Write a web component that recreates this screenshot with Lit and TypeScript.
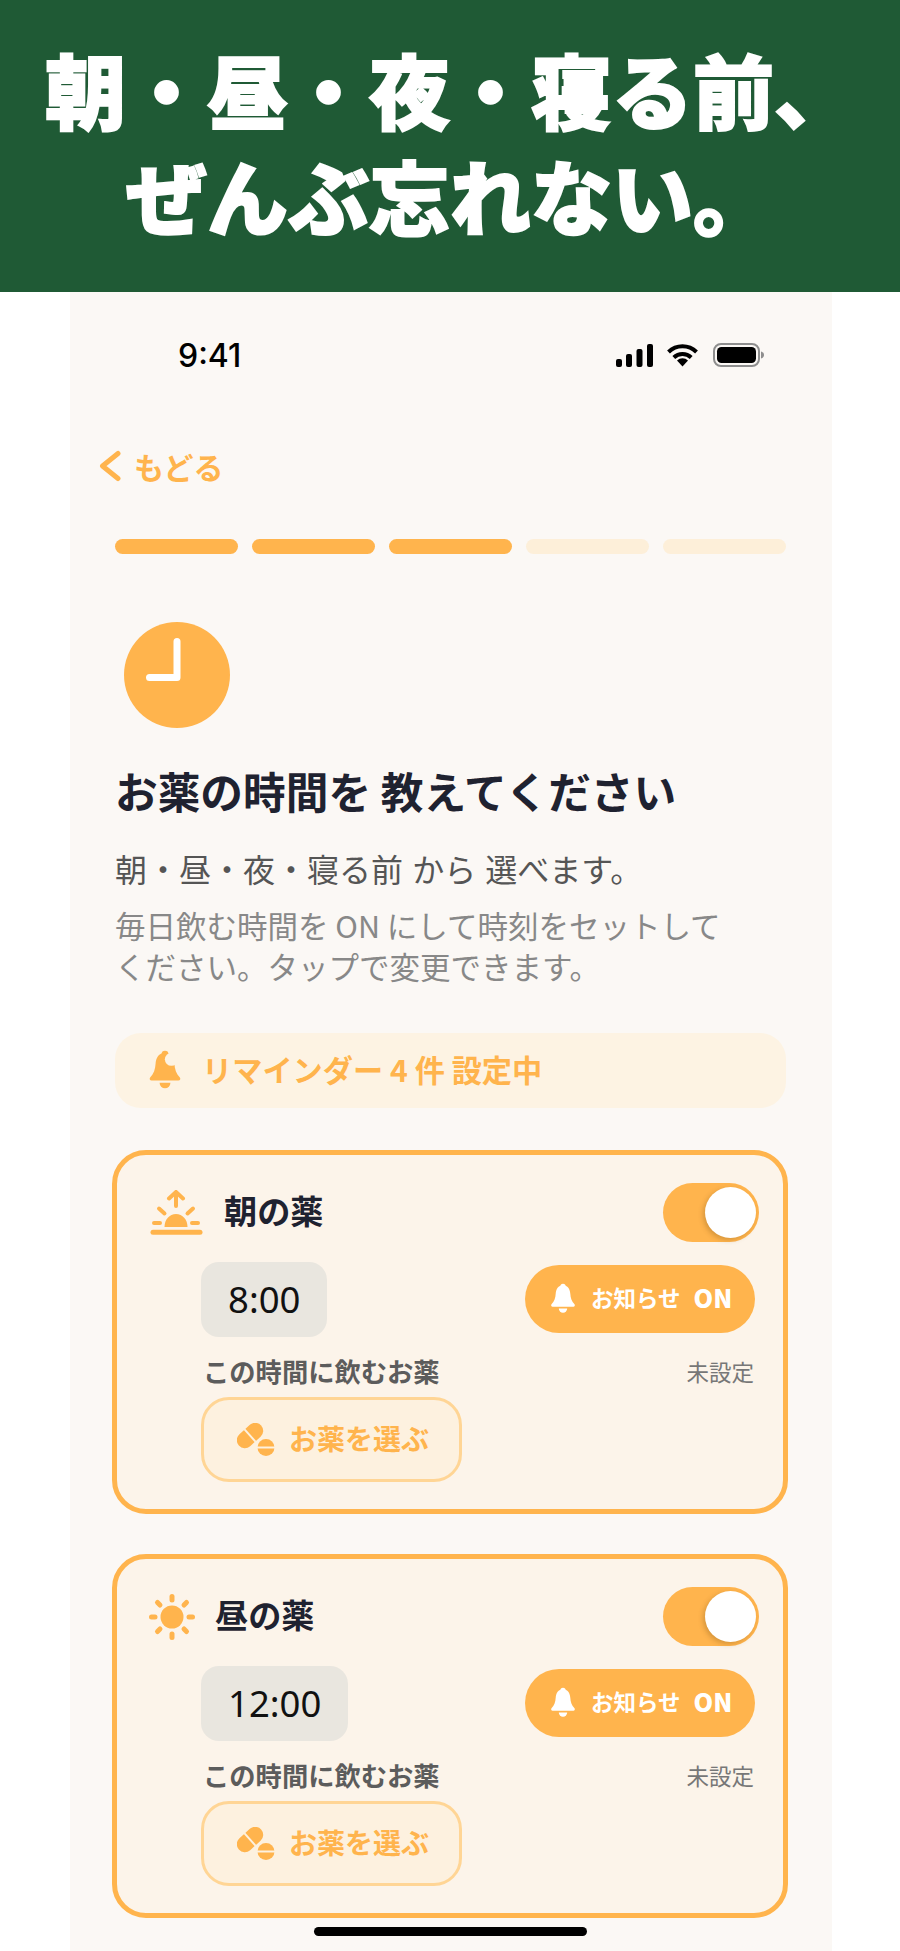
import { LitElement, css, html, svg } from "lit";
import { customElement } from "lit/decorators.js";

const bell = (hole = false) => html`<svg class="bell" viewBox="0 0 24 28">
  <circle cx="12" cy="3" r="2.4" fill="currentColor"></circle>
  <path fill="currentColor" d="M12 2C7.6 2 5.7 5.6 5.4 9.6 5.2 13.4 4.2 16.4 1.6 19.2.9 20 1.4 21.4 2.6 21.4h18.8c1.2 0 1.7-1.4 1-2.2-2.6-2.8-3.6-5.8-3.8-9.6C18.3 5.6 16.4 2 12 2z"></path>
  <path fill="currentColor" d="M8.2 23h7.6a3.8 3.8 0 0 1-7.6 0z"></path>
  ${hole ? svg`<circle cx="16.5" cy="6.5" r="4.6" fill="#fdf3e3"></circle>` : ""}
</svg>`;

const sunrise = html`<svg class="sunrise" viewBox="0 0 54 45" fill="none" stroke="#ffb44d" stroke-linecap="round" stroke-width="4">
  <path d="M27 16V2M20 8.500 27 2l7 6.500"></path>
  <path d="M10 18.500l5.500 5M44 18.500l-5.500 5M5 33h6M43 33h6"></path>
  <path fill="#ffb44d" stroke="none" d="M15.500 37c0-7.500 5-13 11.500-13s11.500 5.500 11.500 13z"></path>
  <path stroke-width="5" d="M4 42.300h47"></path>
</svg>`;

const sun = html`<svg class="sun" viewBox="0 0 48 48" fill="none" stroke="#ffb44d" stroke-linecap="round" stroke-width="5">
  <circle cx="24" cy="24" r="11.500" fill="#ffb44d" stroke="none"></circle>
  ${[0, 45, 90, 135, 180, 225, 270, 315].map(
    (a) => svg`<path transform="rotate(${a} 24 24)" d="M24 3.500v3.500"></path>`
  )}
</svg>`;

const pills = html`<svg class="pills" viewBox="0 0 38 33">
  <g transform="rotate(-42 13 12.500)">
    <rect x="-2" y="4.500" width="30" height="16" rx="8" fill="#ffb44d"></rect>
    <path d="M13 4v17" stroke="#fdf1df" stroke-width="2"></path>
  </g>
  <circle cx="29" cy="24.500" r="8.500" fill="#ffb44d"></circle>
  <path d="M20 24.500h18" stroke="#fdf1df" stroke-width="2"></path>
</svg>`;

const cards = [
  { title: "朝の薬", time: "8:00", icon: sunrise },
  { title: "昼の薬", time: "12:00", icon: sun },
];

@customElement("app-root")
export class AppRoot extends LitElement {
  static styles = css`
    :host {
      display: block;
      position: relative;
      width: 900px;
      height: 1951px;
      overflow: hidden;
      background: #fff;
      font-family: "Noto Sans CJK JP", "Noto Sans", sans-serif;
    }
    .banner {
      height: 292px;
      box-sizing: border-box;
      padding-top: 35px;
      background: #1f5a35;
      color: #fff;
      text-align: center;
      font-size: 81px;
      line-height: 106px;
      font-weight: 900;
      -webkit-text-stroke: 2px #fff;
    }
    .phone {
      margin: 0 68px 0 70px;
      height: 1659px;
      background: #fbf8f5;
    }
    .status {
      display: flex;
      align-items: center;
      height: 126px;
      padding: 0 67px 0 108px;
    }
    .clock-text {
      font-family: Inter, sans-serif;
      font-size: 32px;
      font-weight: 500;
      color: #000;
      flex: 1;
    }
    .status svg { display: block; }
    .signal { width: 37px; height: 23px; }
    .wifi { width: 31px; height: 24px; margin-left: 14px; }
    .battery { width: 52px; height: 24px; margin-left: 15px; }
    .back {
      display: flex;
      align-items: center;
      height: 40px;
      margin: 28px 0 0 29px;
      color: #ffb44d;
      font-size: 30px;
      font-weight: 700;
    }
    .back svg { width: 24px; height: 34px; margin-right: 11px; }
    .content { padding: 0 46px 0 45px; }
    .progress {
      display: grid;
      grid-template-columns: repeat(5, 1fr);
      gap: 14px;
      margin-top: 53px;
    }
    .progress i {
      display: block;
      height: 15px;
      border-radius: 8px;
      background: #fdefd9;
    }
    .progress i.on { background: #ffb44d; }
    .clock-icon {
      display: block;
      width: 106px;
      height: 106px;
      margin: 68px 0 0 9px;
    }
    h1 {
      margin: 34px 0 0;
      font-size: 42.700px;
      line-height: 56px;
      font-weight: 700;
      color: #1f2230;
    }
    .sub {
      margin: 28px 0 0;
      font-size: 32px;
      line-height: 44px;
      word-spacing: 2px;
      color: #555;
    }
    .note {
      margin: 15px 0 0;
      font-size: 30.500px;
      line-height: 41px;
      color: #888;
    }
    .reminder {
      display: flex;
      align-items: center;
      box-sizing: border-box;
      height: 75px;
      margin-top: 46px;
      padding: 0 0 3px 32px;
      border-radius: 26px;
      background: #fdf3e3;
      color: #ffb44d;
      font-size: 30.200px;
      font-weight: 700;
    }
    .reminder .bell { width: 36px; height: 40px; margin: 2px 19px 0 0; }
    .card {
      box-sizing: border-box;
      height: 364px;
      margin: 40px -2px 0 -3px;
      padding: 28px 24px 0 32px;
      border: 5px solid #ffb44d;
      border-radius: 34px;
      background: #fcf4ea;
    }
    .reminder + .card { margin-top: 42px; }
    .head {
      display: flex;
      align-items: center;
      gap: 21px;
      height: 59px;
    }
    .head h2 {
      flex: 1;
      margin: 0;
      padding-bottom: 6px;
      font-size: 33.200px;
      font-weight: 700;
      color: #1f2230;
    }
    .sunrise { width: 54px; height: 45px; }
    .sun { width: 48px; height: 48px; margin: 0 -2px 0 -1px; }
    .toggle {
      position: relative;
      width: 96px;
      height: 59px;
      border-radius: 30px;
      background: #ffb44d;
    }
    .toggle::after {
      content: "";
      position: absolute;
      top: 4px;
      right: 3px;
      width: 51px;
      height: 51px;
      border-radius: 50%;
      background: #fff;
      box-shadow: -2px 2px 5px rgba(120, 80, 20, .3);
    }
    .body { margin-left: 52px; }
    .time-row {
      display: flex;
      align-items: center;
      justify-content: space-between;
      margin: 20px 4px 0 0;
    }
    .time {
      height: 75px;
      padding: 0 27px;
      border-radius: 18px;
      background: #e9e6df;
      font-family: "Noto Sans", sans-serif;
      font-size: 36.500px;
      line-height: 75px;
      color: #111;
    }
    .notify {
      display: flex;
      align-items: center;
      box-sizing: border-box;
      width: 230px;
      height: 68px;
      margin-top: -2px;
      padding: 0 0 3px 24px;
      border-radius: 34px;
      background: #ffb44d;
      color: #fff;
      font-size: 22.500px;
      font-weight: 700;
    }
    .notify .bell { width: 28px; height: 31px; margin: 3px 14px 0 0; }
    .notify b { margin-left: 13px; font-size: 25px; }
    .label-row {
      display: flex;
      align-items: center;
      justify-content: space-between;
      box-sizing: border-box;
      height: 36px;
      margin: 18px 5px 0 2px;
      padding-bottom: 5px;
    }
    .label-row strong { font-size: 26.300px; font-weight: 700; color: #5c5c5c; }
    .label-row span { font-size: 22.500px; color: #777; }
    .pick {
      display: flex;
      align-items: center;
      gap: 14px;
      box-sizing: border-box;
      width: 261px;
      height: 85px;
      margin-top: 6px;
      padding: 0 0 4px 33px;
      border: 3px solid #ffd595;
      border-radius: 28px;
      background: #fdf1df;
      color: #ffb44d;
      font-size: 28px;
      font-weight: 700;
    }
    .pills { width: 38px; height: 33px; margin-top: 4px; }
    .home {
      position: absolute;
      left: 314px;
      top: 1927px;
      width: 273px;
      height: 9px;
      border-radius: 5px;
      background: #000;
    }
  `;

  renderCard(c: (typeof cards)[number]) {
    return html`<section class="card">
      <div class="head">
        ${c.icon}
        <h2>${c.title}</h2>
        <div class="toggle"></div>
      </div>
      <div class="body">
        <div class="time-row">
          <div class="time">${c.time}</div>
          <div class="notify">${bell()}お知らせ<b>ON</b></div>
        </div>
        <div class="label-row">
          <strong>この時間に飲むお薬</strong>
          <span>未設定</span>
        </div>
        <div class="pick">${pills}お薬を選ぶ</div>
      </div>
    </section>`;
  }

  render() {
    return html`
      <header class="banner">朝・昼・夜・寝る前、<br />ぜんぶ忘れない。</header>
      <div class="phone">
        <div class="status">
          <span class="clock-text">9:41</span>
          <svg class="signal" viewBox="0 0 37 23">
            <rect x="0" y="15" width="6" height="8" rx="2"></rect>
            <rect x="10" y="10" width="6" height="13" rx="2"></rect>
            <rect x="20.500" y="5" width="6" height="18" rx="2"></rect>
            <rect x="31" y="0" width="6" height="23" rx="2"></rect>
          </svg>
          <svg class="wifi" viewBox="0 0 31 24" fill="none" stroke="#000" stroke-width="4">
            <path d="M1.500 9A20 20 0 0 1 29.500 9"></path>
            <path d="M6.800 14.500A12.500 12.500 0 0 1 24.200 14.500"></path>
            <path fill="#000" stroke="none" d="M10 17.500a8 8 0 0 1 11 0L15.500 23.500z"></path>
          </svg>
          <svg class="battery" viewBox="0 0 52 24">
            <rect x="1" y="1" width="45" height="22" rx="7" fill="none" stroke="#8e8e8e" stroke-width="2"></rect>
            <rect x="4" y="4" width="39" height="16" rx="4.500" fill="#000"></rect>
            <path d="M48 8.500c2 .5 3 2 3 3.500s-1 3-3 3.500z" fill="#8e8e8e"></path>
          </svg>
        </div>
        <div class="back">
          <svg viewBox="0 0 24 34" fill="none" stroke="currentColor" stroke-width="5" stroke-linecap="round" stroke-linejoin="round">
            <path d="M19 4.500 3.500 17 19 29.500"></path>
          </svg>
          もどる
        </div>
        <div class="content">
          <div class="progress">
            <i class="on"></i><i class="on"></i><i class="on"></i><i></i><i></i>
          </div>
          <svg class="clock-icon" viewBox="0 0 106 106">
            <circle cx="53" cy="53" r="53" fill="#ffb44d"></circle>
            <path d="M53 19.500v36H25.500" fill="none" stroke="#fff" stroke-width="7" stroke-linecap="round" stroke-linejoin="round"></path>
          </svg>
          <h1>お薬の時間を 教えてください</h1>
          <p class="sub">朝・昼・夜・寝る前 から 選べます。</p>
          <p class="note">毎日飲む時間を ON にして時刻をセットして<br />ください。タップで変更できます。</p>
          <div class="reminder">${bell(true)}リマインダー 4 件 設定中</div>
          ${cards.map((c) => this.renderCard(c))}
        </div>
      </div>
      <div class="home"></div>
    `;
  }
}
